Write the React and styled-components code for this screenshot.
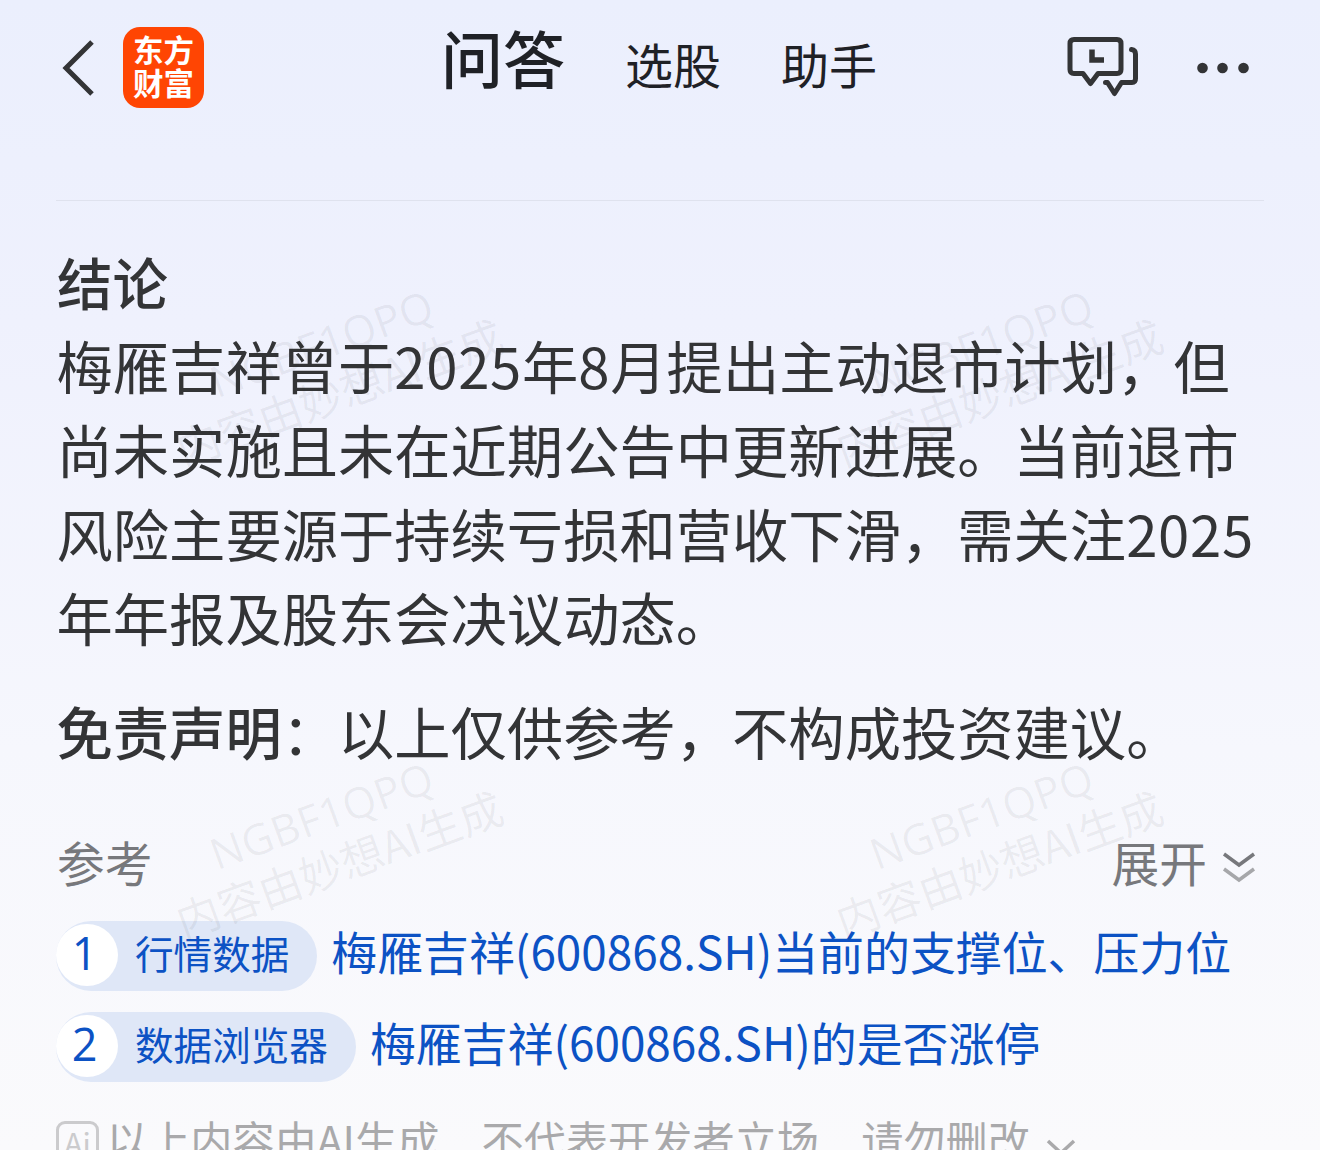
import styled, { createGlobalStyle } from "styled-components";

const GlobalStyle = createGlobalStyle`
  * {
    box-sizing: border-box;
  }

  body {
    margin: 0;
    font-family: "Noto Sans CJK SC", sans-serif;
    color: #333436;
  }
`;

const Page = styled.div`
  position: relative;
  width: 1320px;
  height: 1150px;
  overflow: hidden;
  background: linear-gradient(180deg, #ebeffd 0%, #eff1fd 28%, #f6f7fd 65%, #fafafc 100%);
`;

const Header = styled.header`
  display: grid;
  grid-template-columns: 1fr auto 1fr;
  height: 136px;
  padding: 0 70px 0 62px;
`;

const HeaderLeft = styled.div`
  display: flex;
  align-items: center;
  gap: 28px;
  height: 135px;
`;

const HeaderRight = styled.div`
  display: flex;
  align-items: center;
  justify-content: flex-end;
  gap: 57px;
  height: 135px;
`;

const Logo = styled.div`
  width: 81px;
  height: 81px;
  padding-top: 6px;
  border-radius: 17px;
  background: #ff4503;
  color: #fff;
  font-size: 30.5px;
  font-weight: 700;
  line-height: 33px;
  text-align: center;
`;

const Tabs = styled.nav`
  display: flex;
  align-items: baseline;
  gap: 60px;
  height: 115px;
  padding-left: 6px;
`;

const Tab = styled.span`
  font-size: ${(props) => (props.$active ? 62 : 48)}px;
  font-weight: ${(props) => (props.$active ? 500 : 400)};
  line-height: 115px;
  color: #1f2126;
`;

const Divider = styled.hr`
  height: 1px;
  margin: 64px 56px 0;
  border: 0;
  background: #dfe2ee;
`;

const Content = styled.main`
  padding: 38px 56px 0 57px;
`;

const Title = styled.h2`
  margin: 0;
  font-size: 55.5px;
  font-weight: 500;
  line-height: 84px;
`;

const Paragraph = styled.p`
  margin: 0 0 ${(props) => props.$gap || 0}px -0.5px;
  font-size: 56.3px;
  line-height: 84px;
  white-space: nowrap;
`;

const Digits = styled.span`
  letter-spacing: 0.7px;
`;

const Strong = styled.strong`
  font-weight: 500;
`;

const ReferenceHeader = styled.div`
  display: flex;
  align-items: center;
  justify-content: space-between;
  height: 70px;
  margin-top: 54px;
  padding-right: 8px;
  color: #77787c;
  font-size: 47.7px;
  line-height: 70px;
`;

const Expand = styled.span`
  display: flex;
  align-items: center;
  gap: 15px;
`;

const ReferenceList = styled.ul`
  display: flex;
  flex-direction: column;
  gap: 21px;
  margin: 24px 0 0 -1px;
  padding: 0;
  list-style: none;
`;

const ReferenceItem = styled.li`
  display: flex;
  align-items: center;
  gap: 14px;
  height: 70px;
  color: #0c52c4;
  white-space: nowrap;
`;

const Pill = styled.span`
  display: flex;
  align-items: center;
  gap: 17px;
  height: 70px;
  padding-right: 28px;
  border-radius: 35px;
  background: #dfe7f7;
  font-size: 38.6px;
`;

const Index = styled.span`
  width: 62px;
  height: 62px;
  margin-bottom: 2px;
  padding-right: 5px;
  border-radius: 50%;
  background: #fff;
  font-family: "Open Sans", "Noto Sans CJK SC", sans-serif;
  font-size: 45px;
  line-height: 57px;
  text-align: center;
`;

const Label = styled.span`
  padding-bottom: 9px;
  line-height: 50px;
`;

const Link = styled.span`
  font-size: 45.9px;
  line-height: 60px;
  padding-bottom: 13px;
`;

const Notice = styled.footer`
  display: flex;
  align-items: center;
  height: 60px;
  margin: 27px 0 0 -1px;
  color: #a9a9ab;
  font-size: 42.2px;
  line-height: 60px;
  white-space: nowrap;
`;

const Comma = styled.span`
  line-height: 1;
  vertical-align: -5px;
`;

const AiBadge = styled.span`
  width: 43px;
  height: 43px;
  margin: 7px 7px 0 0;
  border: 3px solid #cbcbcd;
  border-radius: 9px;
  color: #cbcbcd;
  font-size: 30px;
  line-height: 37px;
  text-align: center;
`;

const Watermark = styled.div`
  position: absolute;
  left: ${(props) => props.$x}px;
  top: ${(props) => props.$y}px;
  transform: translate(-50%, -50%) rotate(-20deg);
  color: rgba(40, 40, 50, 0.065);
  font-size: 43.5px;
  line-height: 51px;
  text-align: center;
  white-space: nowrap;
  pointer-events: none;
`;

const WatermarkCode = styled.div`
  font-family: "Open Sans", "Noto Sans CJK SC", sans-serif;
  font-size: 43px;
  letter-spacing: 0.4px;
`;

const watermarks = [
  { x: 330, y: 367 },
  { x: 990, y: 367 },
  { x: 330, y: 839 },
  { x: 990, y: 839 },
];

const references = [
  { source: "行情数据", text: "梅雁吉祥(600868.SH)当前的支撑位、压力位" },
  { source: "数据浏览器", text: "梅雁吉祥(600868.SH)的是否涨停" },
];

const BackIcon = () => (
  <svg width="33" height="56" viewBox="0 0 33 56" fill="none">
    <path d="M30 2 4 28l26 26" stroke="#333436" strokeWidth="5" />
  </svg>
);

const HistoryIcon = () => (
  <svg width="72" height="64" viewBox="0 0 72 64" fill="none">
    <g stroke="#333436" strokeWidth="5" strokeLinecap="round" strokeLinejoin="round">
      <path d="M7 3.500H50Q54 3.500 54 7.500V33.500Q54 37.500 50 37.500H31L23.500 47.500 16 37.500H7Q3 37.500 3 33.500V7.500Q3 3.500 7 3.500Z" />
      <path d="M64.500 13.500Q68.500 14 68.500 18V42.500Q68.500 46.500 65 46.500H54.500L47.500 57.500 40.500 46.500H38.500" />
    </g>
    <path d="M25 13.500V24H37" stroke="#333436" strokeWidth="5.500" />
  </svg>
);

const MoreIcon = () => (
  <svg width="54" height="12" viewBox="0 0 54 12" fill="#333436">
    <circle cx="6.500" cy="6" r="5.300" />
    <circle cx="26.500" cy="6" r="5.300" />
    <circle cx="47.500" cy="6" r="5.300" />
  </svg>
);

const DoubleChevronSvg = styled.svg`
  margin-top: 9px;
`;

const DoubleChevron = () => (
  <DoubleChevronSvg width="34" height="32" viewBox="0 0 34 32" fill="none" strokeWidth="3.500">
    <path d="M2 3 17 14 32 3" stroke="#77787c" />
    <path d="M2 18 17 29 32 18" stroke="#a6a7aa" />
  </DoubleChevronSvg>
);

const ChevronSlot = styled.span`
  display: flex;
  margin: 17px 0 0 16px;
`;

const Chevron = () => (
  <svg width="30" height="20" viewBox="0 0 30 20" fill="none">
    <path d="M2 3 15 15 28 3" stroke="#a9a9ab" strokeWidth="3.500" />
  </svg>
);

const App = () => {
  return (
    <Page>
      <GlobalStyle />
      <Header>
        <HeaderLeft>
          <BackIcon />
          <Logo>
            东方
            <br />
            财富
          </Logo>
        </HeaderLeft>
        <Tabs>
          <Tab $active>问答</Tab>
          <Tab>选股</Tab>
          <Tab>助手</Tab>
        </Tabs>
        <HeaderRight>
          <HistoryIcon />
          <MoreIcon />
        </HeaderRight>
      </Header>
      <Divider />
      <Content>
        <Title>结论</Title>
        <Paragraph $gap={30}>
          梅雁吉祥曾于<Digits>2025</Digits>年<Digits>8</Digits>月提出主动退市计划，但
          <br />
          尚未实施且未在近期公告中更新进展。当前退市
          <br />
          风险主要源于持续亏损和营收下滑，需关注<Digits>2025</Digits>
          <br />
          年年报及股东会决议动态。
        </Paragraph>
        <Paragraph>
          <Strong>免责声明</Strong>：以上仅供参考，不构成投资建议。
        </Paragraph>
        <ReferenceHeader>
          <span>参考</span>
          <Expand>
            展开
            <DoubleChevron />
          </Expand>
        </ReferenceHeader>
        <ReferenceList>
          {references.map((item, index) => (
            <ReferenceItem key={item.source}>
              <Pill>
                <Index>{index + 1}</Index>
                <Label>{item.source}</Label>
              </Pill>
              <Link>{item.text}</Link>
            </ReferenceItem>
          ))}
        </ReferenceList>
        <Notice>
          <AiBadge>Ai</AiBadge>
          <span>
            以上内容由AI生成<Comma>，</Comma>不代表开发者立场<Comma>，</Comma>请勿删改
          </span>
          <ChevronSlot>
            <Chevron />
          </ChevronSlot>
        </Notice>
      </Content>
      {watermarks.map((mark) => (
        <Watermark key={`${mark.x}-${mark.y}`} $x={mark.x} $y={mark.y}>
          <WatermarkCode>NGBF1QPQ</WatermarkCode>
          内容由妙想AI生成
        </Watermark>
      ))}
    </Page>
  );
};

export default App;
